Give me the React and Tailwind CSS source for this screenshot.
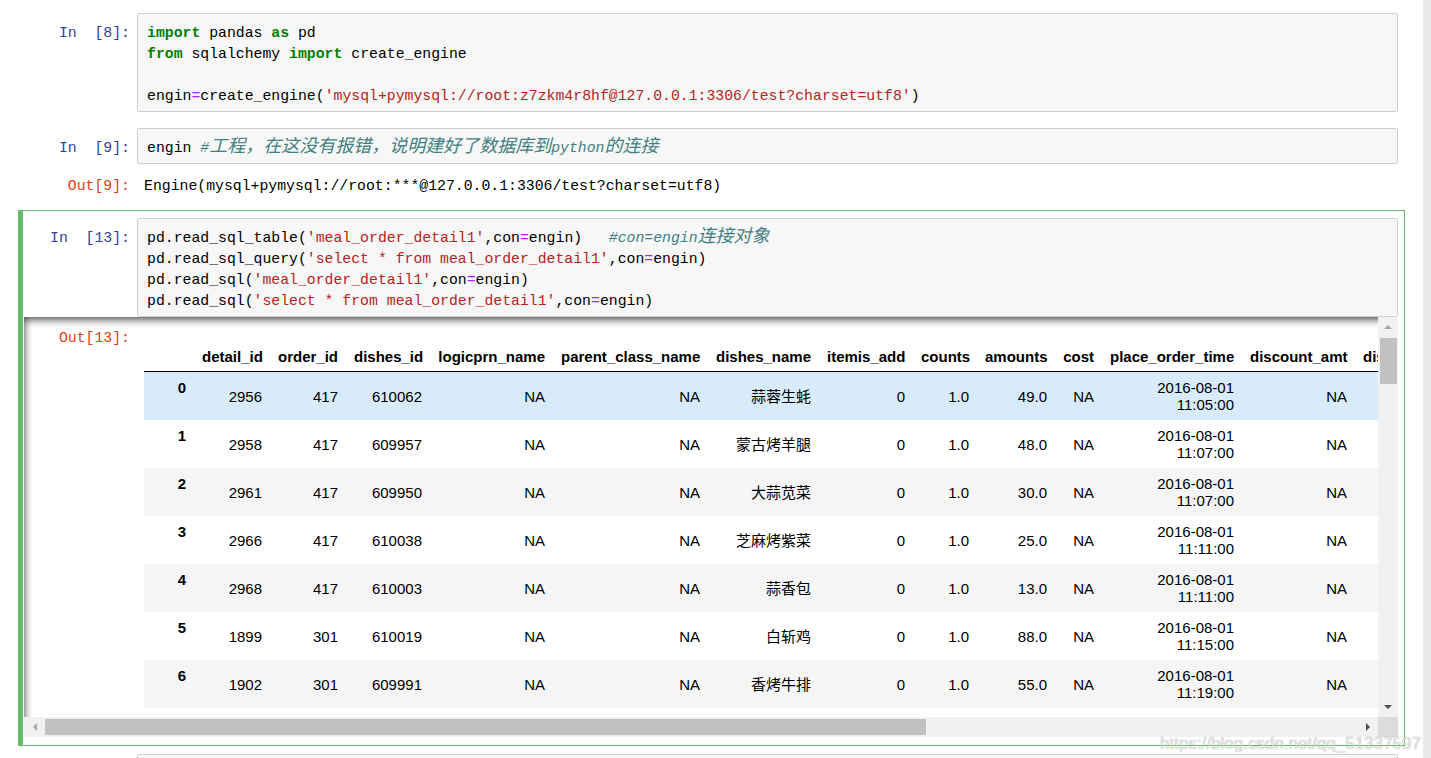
import React from "react";

const Kw = ({ children }) => <span className="text-[#008000] font-bold">{children}</span>;
const Str = ({ children }) => <span className="text-[#BA2121]">{children}</span>;
const Op = ({ children }) => <span className="text-[#AA22FF]">{children}</span>;
const Cm = ({ children }) => <span className="text-[#408080] italic">{children}</span>;
const Cjk = ({ children }) => (
  <span className="text-[18px] leading-[0] font-['Noto_Sans_CJK_SC',sans-serif]">{children}</span>
);

const mono = "font-['Liberation_Mono','Noto_Sans_CJK_SC',monospace] text-[14.8px] leading-[21px]";

function Cell({ selected, children }) {
  return (
    <div
      className={
        "border border-l-[5px] pt-[7px] pr-[6px] " +
        (selected ? "border-[#66bb6a] pb-[8px]" : "border-transparent pb-[7px]")
      }
    >
      {children}
    </div>
  );
}

function Line({ children }) {
  return <div className="h-[21px] whitespace-pre">{children}</div>;
}

function InRow({ n, children }) {
  return (
    <div className="flex">
      <div className={"w-[114px] shrink-0 text-right pr-[7px] pt-[9.5px] whitespace-pre text-[#303F9F] " + mono}>
        {"In  [" + n + "]:"}
      </div>
      <div className={"flex-1 min-w-0 bg-[#f7f7f7] border border-[#cfcfcf] rounded-[2px] px-[9px] pt-[8.5px] pb-[4.5px] text-black whitespace-pre " + mono}>
        {children}
      </div>
    </div>
  );
}

const headers = [
  "",
  "detail_id",
  "order_id",
  "dishes_id",
  "logicprn_name",
  "parent_class_name",
  "dishes_name",
  "itemis_add",
  "counts",
  "amounts",
  "cost",
  "place_order_time",
  "discount_amt",
  "discount_reason",
];

const rows = [
  ["0", "2956", "417", "610062", "蒜蓉生蚝", "49.0", "11:05:00"],
  ["1", "2958", "417", "609957", "蒙古烤羊腿", "48.0", "11:07:00"],
  ["2", "2961", "417", "609950", "大蒜苋菜", "30.0", "11:07:00"],
  ["3", "2966", "417", "610038", "芝麻烤紫菜", "25.0", "11:11:00"],
  ["4", "2968", "417", "610003", "蒜香包", "13.0", "11:11:00"],
  ["5", "1899", "301", "610019", "白斩鸡", "88.0", "11:15:00"],
  ["6", "1902", "301", "609991", "香烤牛排", "55.0", "11:19:00"],
];

const rowBg = ["bg-[#d8ebfa]", "bg-white", "bg-[#f5f5f5]", "bg-white", "bg-[#f5f5f5]", "bg-white", "bg-[#f5f5f5]"];

function Tri({ dir, color }) {
  const pts = {
    up: "0,4 4,0 8,4",
    down: "0,0 8,0 4,4",
    left: "4,0 4,8 0,4",
    right: "0,0 0,8 4,4",
  }[dir];
  const vertical = dir === "up" || dir === "down";
  return (
    <svg width={vertical ? 8 : 4} height={vertical ? 4 : 8} viewBox={vertical ? "0 0 8 4" : "0 0 4 8"}>
      <polygon points={pts} fill={color} />
    </svg>
  );
}

function DataTable() {
  const td = "text-right px-2 py-[7px] align-middle leading-[17px]";
  return (
    <table className="table-fixed border-collapse w-[1345px] text-[15px] text-black font-['Liberation_Sans','Noto_Sans_CJK_SC',sans-serif]">
      <colgroup>
        <col className="w-[50px]" />
        <col className="w-[76px]" />
        <col className="w-[76px]" />
        <col className="w-[84px]" />
        <col className="w-[123px]" />
        <col className="w-[155px]" />
        <col className="w-[111px]" />
        <col className="w-[94px]" />
        <col className="w-[64px]" />
        <col className="w-[78px]" />
        <col className="w-[47px]" />
        <col className="w-[140px]" />
        <col className="w-[113px]" />
        <col className="w-[134px]" />
      </colgroup>
      <thead>
        <tr>
          {headers.map((h, i) => (
            <th
              key={i}
              className="text-right font-bold px-2 pt-[9px] pb-[6px] leading-[17px] whitespace-nowrap border-b border-black"
            >
              {h}
            </th>
          ))}
        </tr>
      </thead>
      <tbody>
        {rows.map((r, i) => (
          <tr key={i} className={rowBg[i]}>
            <th className="text-right font-bold px-2 py-[7px] align-top leading-[17px]">{r[0]}</th>
            <td className={td}>{r[1]}</td>
            <td className={td}>{r[2]}</td>
            <td className={td}>{r[3]}</td>
            <td className={td}>NA</td>
            <td className={td}>NA</td>
            <td className={td + " whitespace-nowrap"}>{r[4]}</td>
            <td className={td}>0</td>
            <td className={td}>1.0</td>
            <td className={td}>{r[5]}</td>
            <td className={td}>NA</td>
            <td className={td}>
              <div>2016-08-01</div>
              <div>{r[6]}</div>
            </td>
            <td className={td}>NA</td>
            <td className={td}>NA</td>
          </tr>
        ))}
      </tbody>
    </table>
  );
}

export default function App() {
  return (
    <div className="relative h-[758px] w-[1431px] overflow-hidden bg-white flex">
      <div className="flex-1 min-w-0 pl-[18px] pr-[18px] pt-[5px]">
        {/* Cell 1 */}
        <Cell>
          <InRow n="8">
            <Line>
              <Kw>import</Kw> pandas <Kw>as</Kw> pd
            </Line>
            <Line>
              <Kw>from</Kw> sqlalchemy <Kw>import</Kw> create_engine
            </Line>
            <Line>{" "}</Line>
            <Line>
              engin<Op>=</Op>create_engine(<Str>'mysql+pymysql://root:z7zkm4r8hf@127.0.0.1:3306/test?charset=utf8'</Str>)
            </Line>
          </InRow>
        </Cell>

        {/* Cell 2 */}
        <Cell>
          <InRow n="9">
            <Line>
              engin{" "}
              <Cm>
                #<Cjk>工程，在这没有报错，说明建好了数据库到</Cjk>python<Cjk>的连接</Cjk>
              </Cm>
            </Line>
          </InRow>
          <div className="flex pt-[12px] pb-[5px]">
            <div className={"w-[114px] shrink-0 text-right pr-[7px] text-[#D84315] " + mono}>Out[9]:</div>
            <div className={"pl-[7px] text-black whitespace-pre " + mono}>
              Engine(mysql+pymysql://root:***@127.0.0.1:3306/test?charset=utf8)
            </div>
          </div>
        </Cell>

        {/* Cell 3 (selected) */}
        <Cell selected>
          <InRow n="13">
            <Line>
              pd.read_sql_table(<Str>'meal_order_detail1'</Str>,con<Op>=</Op>engin){"   "}
              <Cm>
                #con=engin<Cjk>连接对象</Cjk>
              </Cm>
            </Line>
            <Line>
              pd.read_sql_query(<Str>'select * from meal_order_detail1'</Str>,con<Op>=</Op>engin)
            </Line>
            <Line>
              pd.read_sql(<Str>'meal_order_detail1'</Str>,con<Op>=</Op>engin)
            </Line>
            <Line>
              pd.read_sql(<Str>'select * from meal_order_detail1'</Str>,con<Op>=</Op>engin)
            </Line>
          </InRow>

          {/* Output scroll area */}
          <div className="h-[420px] flex flex-col shadow-[inset_0_2px_8px_rgba(0,0,0,0.8)] ml-[1px]">
            <div className="flex-1 flex min-h-0">
              <div className="flex-1 flex min-w-0 overflow-hidden">
                <div className={"w-[113px] shrink-0 text-right pr-[7px] pt-[10.5px] text-[#D84315] " + mono}>
                  Out[13]:
                </div>
                <div className="flex-1 min-w-0 overflow-hidden pl-[7px] pt-[22px]">
                  <DataTable />
                </div>
              </div>
              {/* vertical scrollbar */}
              <div className="w-[20px] shrink-0 bg-[#f1f1f1] flex flex-col items-center">
                <div className="h-[20px] w-full flex items-center justify-center">
                  <Tri dir="up" color="#a3a3a3" />
                </div>
                <div className="mt-[1px] h-[46px] w-[17px] bg-[#c1c1c1]" />
                <div className="flex-1" />
                <div className="h-[20px] w-full flex items-center justify-center">
                  <Tri dir="down" color="#505050" />
                </div>
              </div>
            </div>
            {/* horizontal scrollbar */}
            <div className="h-[20px] shrink-0 flex">
              <div className="flex-1 min-w-0 bg-[#f1f1f1] flex items-center">
                <div className="w-[21px] h-full flex items-center justify-center">
                  <Tri dir="left" color="#a3a3a3" />
                </div>
                <div className="w-[881px] h-[16px] bg-[#c1c1c1]" />
                <div className="flex-1" />
                <div className="w-[20px] h-full flex items-center justify-center">
                  <Tri dir="right" color="#505050" />
                </div>
              </div>
              <div className="w-[20px] bg-[#dcdcdc]" />
            </div>
          </div>
        </Cell>

        {/* Next cell (partially visible) */}
        <Cell>
          <InRow n=" ">
            <Line>{" "}</Line>
            <Line>{" "}</Line>
          </InRow>
        </Cell>
      </div>
      <div className="w-[8px] shrink-0 bg-[#e8e8e8]" />

      {/* watermark */}
      <div className="absolute right-[10px] bottom-[4px] text-[17px] leading-[20px] font-['Liberation_Sans',sans-serif] text-[rgba(255,255,255,0.75)] [text-shadow:0_0_1px_rgba(0,0,0,0.45)] pointer-events-none">
        https://blog.csdn.net/qq_51337597
      </div>
    </div>
  );
}
